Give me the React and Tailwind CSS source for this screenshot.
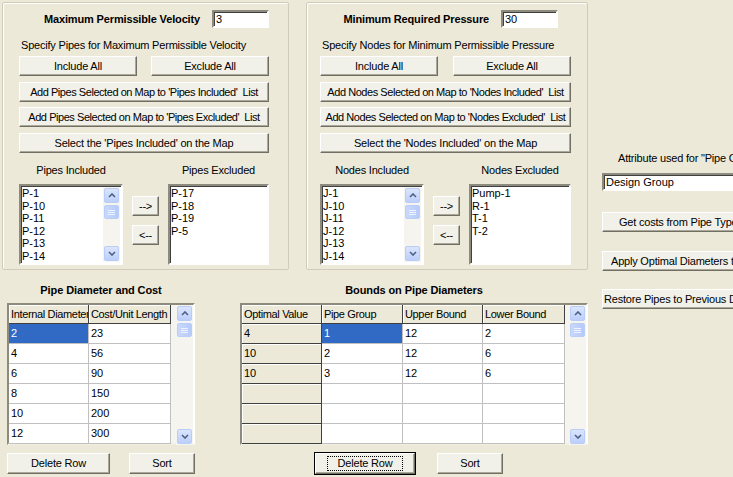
import React from "react";

const FONT = { fontFamily: '"Liberation Sans", Arial, sans-serif' };

function Btn({ children, className = "", def = false, track = "tracking-[-0.2px]", align = "justify-center" }) {
  return (
    <div
      className={
        "flex items-center whitespace-nowrap overflow-hidden text-[11px] text-black bg-[#f1f0e9] h-[20px] border border-t-white border-l-white border-r-[#716f64] border-b-[#716f64] shadow-[inset_-1px_-1px_0_#aca899] " +
        align +
        " " +
        track +
        " " +
        (def ? "outline outline-1 outline-black " : "") +
        className
      }
    >
      {def ? (
        <span className="border border-dotted border-black px-[10px] leading-[13px]">{children}</span>
      ) : (
        children
      )}
    </div>
  );
}

function Chevron({ up }) {
  return (
    <svg width="8" height="5" viewBox="0 0 8 5">
      <polyline
        points={up ? "1,4 4,1 7,4" : "1,1 4,4 7,1"}
        fill="none"
        stroke="#4d6185"
        strokeWidth="1.6"
      />
    </svg>
  );
}

function ArrowBtn({ up }) {
  return (
    <div className="w-[15px] h-[15px] mx-auto rounded-[2px] border border-[#b9cdf9] bg-gradient-to-b from-[#dbe5fd] to-[#bccffa] flex items-center justify-center">
      <Chevron up={up} />
    </div>
  );
}

function ScrollBar({ className = "" }) {
  return (
    <div className={"w-[17px] flex flex-col bg-[#f5f4ee] py-[1px] " + className}>
      <ArrowBtn up />
      <div className="mt-[2px] w-[15px] h-[14px] mx-auto rounded-[2px] border border-[#b9cdf9] bg-gradient-to-r from-[#c9d8fc] to-[#b6cafa] flex flex-col items-center justify-center gap-[1px]">
        <div className="w-[7px] h-[1px] bg-[#eef3ff]" />
        <div className="w-[7px] h-[1px] bg-[#eef3ff]" />
        <div className="w-[7px] h-[1px] bg-[#eef3ff]" />
      </div>
      <div className="flex-1" />
      <ArrowBtn />
    </div>
  );
}

function Sunken({ children, className = "" }) {
  return (
    <div
      className={
        "bg-white border-2 border-t-[#8d8a7e] border-l-[#8d8a7e] border-r-white border-b-white shadow-[inset_1px_1px_0_#404040] " +
        className
      }
    >
      {children}
    </div>
  );
}

function ListBox({ items, scroll = false, className = "" }) {
  return (
    <Sunken className={"h-[81px] flex " + className}>
      <div className="flex-1 pl-[1px] pt-[1px] text-[11px] leading-[12.5px] text-black overflow-hidden">
        {items.map((t) => (
          <div key={t}>{t}</div>
        ))}
      </div>
      {scroll && <ScrollBar className="my-[1px] mr-[1px]" />}
    </Sunken>
  );
}

function GroupBox({ children, className = "" }) {
  return (
    <div className={"border border-[#cfccbc] rounded-[2px] shadow-[inset_1px_1px_0_#ffffff] " + className}>
      {children}
    </div>
  );
}

function CriteriaGroup({ title, value, specify, kind, included, excluded, className, titlePr, pl, pr }) {
  const long = "tracking-[-0.45px]";
  return (
    <GroupBox className={"flex flex-col " + className}>
      <div className={"flex flex-col " + pl + " " + pr}>
        <div className={"mt-[7px] h-[18px] flex items-center justify-end " + titlePr}>
          <span className="font-bold text-[11px] tracking-[-0.15px] mr-[12px]">{title}</span>
          <Sunken className="w-[57px] h-[18px] flex items-center pl-[2px] text-[11px]">{value}</Sunken>
        </div>
        <div className="mt-[11px] h-[13px] leading-[13px] text-[11px] tracking-[-0.2px] pl-[2px]">{specify}</div>
        <div className="mt-[4px] flex justify-between">
          <Btn className="w-[118px]">Include All</Btn>
          <Btn className="w-[118px]">Exclude All</Btn>
        </div>
        <Btn track={long} className="mt-[6px]">
          Add {kind} Selected on Map to '{kind} Included'&nbsp; List
        </Btn>
        <Btn track={long} className="mt-[5px]">
          Add {kind} Selected on Map to '{kind} Excluded'&nbsp; List
        </Btn>
        <Btn className="mt-[6px]">Select the '{kind} Included' on the Map</Btn>
        <div className="mt-[11px] flex">
          <div className="w-[104px] flex flex-col">
            <div className="h-[13px] leading-[13px] text-[11px] text-center tracking-[-0.2px]">{kind} Included</div>
            <ListBox className="mt-[7px]" items={included} scroll />
          </div>
          <div className="w-[27px] ml-[9px] pt-[32px] flex flex-col gap-[9px]">
            <Btn className="h-[18px] w-[27px]">--&gt;</Btn>
            <Btn className="h-[18px] w-[27px]">&lt;--</Btn>
          </div>
          <div className="flex-1 ml-[9px] flex flex-col">
            <div className="h-[13px] leading-[13px] text-[11px] text-center tracking-[-0.2px]">{kind} Excluded</div>
            <ListBox className="mt-[7px]" items={excluded} />
          </div>
        </div>
      </div>
    </GroupBox>
  );
}

function HeaderCell({ children, w }) {
  return (
    <div
      className="h-[19px] shrink-0 bg-[#ece9d8] border-r border-b border-r-[#404040] border-b-[#404040] shadow-[inset_1px_1px_0_#ffffff] pl-[2px] flex items-center text-[11px] tracking-[-0.35px] whitespace-nowrap overflow-hidden"
      style={{ width: w }}
    >
      {children}
    </div>
  );
}

function DataCell({ children, w, sel = false, fixed = false }) {
  let cls =
    "h-[20px] shrink-0 pl-[2px] flex items-center text-[11px] whitespace-nowrap overflow-hidden ";
  if (fixed)
    cls += "bg-[#ece9d8] border-r border-b border-r-[#404040] border-b-[#404040] shadow-[inset_1px_1px_0_#ffffff]";
  else if (sel) cls += "bg-[#316ac5] text-white border-r border-b border-[#c0c0c0]";
  else cls += "bg-white border-r border-b border-[#c0c0c0]";
  return (
    <div className={cls} style={{ width: w }}>
      {children}
    </div>
  );
}

function Grid({ cols, rows, fixedFirst = false, className = "" }) {
  return (
    <div
      className={
        "h-[142px] flex bg-[#f5f4ee] border-2 border-t-[#8d8a7e] border-l-[#8d8a7e] border-r-white border-b-[#f1efe2] " +
        className
      }
    >
      <div className="flex flex-col">
        <div className="flex">
          {cols.map((c) => (
            <HeaderCell key={c.label} w={c.w}>
              {c.label}
            </HeaderCell>
          ))}
        </div>
        {rows.map((r, i) => (
          <div key={i} className="flex">
            {r.map((v, j) => (
              <DataCell
                key={j}
                w={cols[j].w}
                fixed={fixedFirst && j === 0}
                sel={i === 0 && j === (fixedFirst ? 1 : 0)}
              >
                {v}
              </DataCell>
            ))}
          </div>
        ))}
      </div>
      <div className="flex-1" />
      <ScrollBar className="h-[140px] bg-[#f5f4ee]" />
    </div>
  );
}

export default function App() {
  return (
    <div
      className="w-[733px] h-[477px] bg-[#ece9d8] overflow-hidden flex text-black select-none"
      style={FONT}
    >
      <div className="w-[590px] shrink-0 flex flex-col">
        <div className="pt-[2px] pl-[2px] flex">
          <CriteriaGroup
            className="w-[287px] h-[268px]"
            pl="pl-[16px]"
            pr="pr-[19px]"
            titlePr="pr-0"
            title="Maximum Permissible Velocity"
            value="3"
            specify="Specify Pipes for Maximum Permissible Velocity"
            kind="Pipes"
            included={["P-1", "P-10", "P-11", "P-12", "P-13", "P-14"]}
            excluded={["P-17", "P-18", "P-19", "P-5"]}
          />
          <CriteriaGroup
            className="ml-[17px] w-[282px] h-[268px]"
            pl="pl-[13px]"
            pr="pr-[16px]"
            titlePr="pr-[13px]"
            title="Minimum Required Pressure"
            value="30"
            specify="Specify Nodes for Minimum Permissible Pressure"
            kind="Nodes"
            included={["J-1", "J-10", "J-11", "J-12", "J-13", "J-14"]}
            excluded={["Pump-1", "R-1", "T-1", "T-2"]}
          />
        </div>
        <div className="flex">
          <div className="ml-[7px] w-[188px] flex flex-col">
            <div className="mt-[14px] h-[13px] leading-[13px] text-center font-bold text-[11px] tracking-[-0.1px]">
              Pipe Diameter and Cost
            </div>
            <Grid
              className="mt-[6px]"
              cols={[
                { label: "Internal Diameter", w: 80 },
                { label: "Cost/Unit Length", w: 82 },
              ]}
              rows={[
                ["2", "23"],
                ["4", "56"],
                ["6", "90"],
                ["8", "150"],
                ["10", "200"],
                ["12", "300"],
              ]}
            />
            <div className="mt-[8px] flex justify-between">
              <Btn className="w-[103px] h-[21px]">Delete Row</Btn>
              <Btn className="w-[66px] h-[21px]">Sort</Btn>
            </div>
          </div>
          <div className="ml-[45px] w-[348px] flex flex-col">
            <div className="mt-[14px] h-[13px] leading-[13px] text-center font-bold text-[11px] tracking-[-0.1px]">
              Bounds on Pipe Diameters
            </div>
            <Grid
              className="mt-[6px]"
              fixedFirst
              cols={[
                { label: "Optimal Value", w: 80 },
                { label: "Pipe Group", w: 81 },
                { label: "Upper Bound", w: 80 },
                { label: "Lower Bound", w: 82 },
              ]}
              rows={[
                ["4", "1", "12", "2"],
                ["10", "2", "12", "6"],
                ["10", "3", "12", "6"],
                ["", "", "", ""],
                ["", "", "", ""],
                ["", "", "", ""],
              ]}
            />
            <div className="mt-[8px] pl-[75px] flex gap-[22px]">
              <Btn def className="w-[100px] h-[21px]">Delete Row</Btn>
              <Btn className="w-[66px] h-[21px]">Sort</Btn>
            </div>
          </div>
        </div>
      </div>
      <div className="flex-1 pl-[12px] pt-[152px] flex flex-col">
        <div className="w-[170px] shrink-0 h-[13px] leading-[13px] text-[11px] pl-[16px] tracking-[-0.2px] whitespace-nowrap">
          Attribute used for "Pipe Groups"
        </div>
        <Sunken className="mt-[8px] w-[170px] shrink-0 h-[18px] flex items-center pl-[2px] text-[11px]">
          Design Group
        </Sunken>
        <Btn align="justify-start" className="mt-[21px] w-[170px] shrink-0 pl-[16px]">
          Get costs from Pipe Types
        </Btn>
        <Btn align="justify-start" className="mt-[19px] w-[170px] shrink-0 pl-[8px]">
          Apply Optimal Diameters to Pipes
        </Btn>
        <Btn align="justify-start" className="mt-[18px] w-[170px] shrink-0 pl-[1px]">
          Restore Pipes to Previous Design
        </Btn>
      </div>
    </div>
  );
}
